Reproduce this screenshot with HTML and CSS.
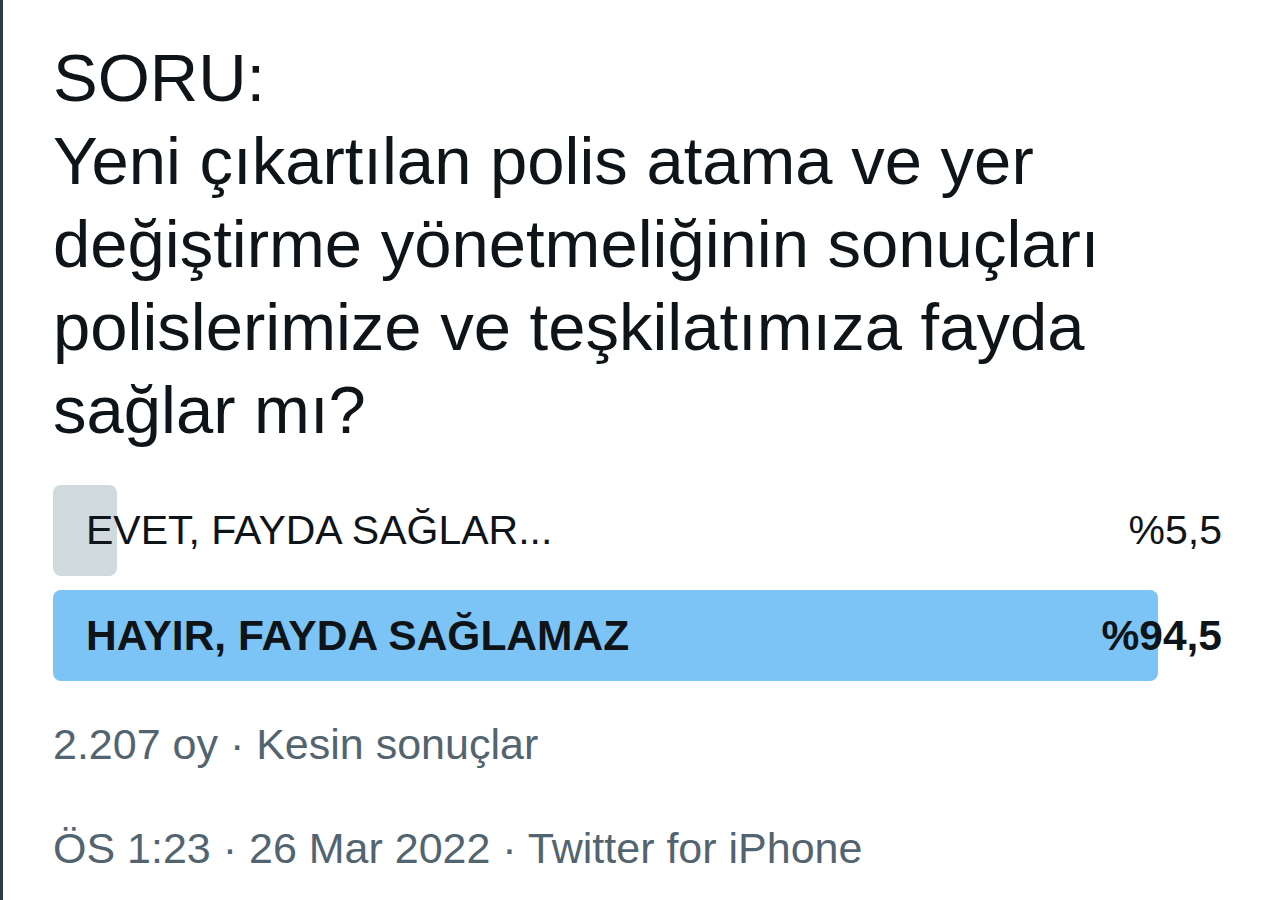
FILE: index.html
```html
<!DOCTYPE html>
<html lang="tr">
<head>
    <meta charset="UTF-8">
    <meta name="viewport" content="width=device-width, initial-scale=1.0">
    <title>Anket</title>
    <link rel="stylesheet" href="styles.css">
</head>
<body>
<div class="tweet">
    <p class="tweet-text">SORU:<br>Yeni çıkartılan polis atama ve yer değiştirme yönetmeliğinin sonuçları polislerimize ve teşkilatımıza fayda sağlar mı?</p>

    <div class="poll">
        <div class="poll-option">
            <div class="poll-bar" style="width: 5.5%"></div>
            <span class="poll-label">EVET, FAYDA SAĞLAR...</span>
            <span class="poll-percent">%5,5</span>
        </div>
        <div class="poll-option winner">
            <div class="poll-bar" style="width: 94.5%"></div>
            <span class="poll-label">HAYIR, FAYDA SAĞLAMAZ</span>
            <span class="poll-percent">%94,5</span>
        </div>
    </div>

    <div class="poll-info">2.207 oy · Kesin sonuçlar</div>
    <div class="tweet-meta">ÖS 1:23 · 26 Mar 2022 · Twitter for iPhone</div>
</div>
</body>
</html>
```

FILE: styles.css
```css
body {
    margin: 0;
    padding: 0;
    background-color: #ffffff;
    font-family: "Liberation Sans", Arial, sans-serif;
    color: #0f1419;
}
.tweet {
    min-height: 900px;
    box-sizing: border-box;
    border-left: 3px solid #2e3846;
    padding: 36px 50px 0 50px;
}
.tweet-text {
    margin: 0;
    font-size: 67px;
    line-height: 83px;
    max-width: 1169px;
}
.poll {
    display: flex;
    flex-direction: column;
    gap: 14px;
    margin-top: 34px;
    width: 1169px;
}
.poll-option {
    position: relative;
    display: flex;
    align-items: center;
    justify-content: space-between;
    height: 91px;
    font-size: 41px;
}
.poll-bar {
    position: absolute;
    top: 0;
    left: 0;
    height: 100%;
    border-radius: 8px;
    background-color: #cfd9de;
}
.winner .poll-bar {
    background-color: #7cc4f5;
}
.winner {
    font-weight: bold;
    font-size: 42.5px;
}
.poll-label, .poll-percent {
    position: relative;
}
.poll-label {
    padding-left: 33px;
}
.poll-info, .tweet-meta {
    font-size: 43px;
    line-height: 50px;
    color: #536471;
}
.poll-info {
    margin-top: 38px;
}
.tweet-meta {
    margin-top: 54px;
}
```
